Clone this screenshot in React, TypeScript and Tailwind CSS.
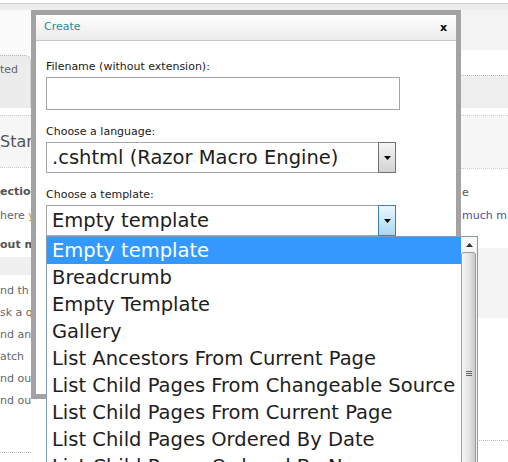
import React from "react";

const FONT = "font-['DejaVu_Sans',sans-serif]";

function Arrow({ color = "#000" }: { color?: string }) {
  return (
    <svg width="7" height="4" viewBox="0 0 7 4">
      <path d="M0 0H7L3.5 4Z" fill={color} />
    </svg>
  );
}

function Select({ text, open }: { text: string; open?: boolean }) {
  return (
    <div className="mt-[4px] flex h-[31px] w-[350px]">
      <div className="flex flex-1 items-center border-y border-l border-[#a5a5a5] pl-[5px]">
        <span className="whitespace-nowrap text-[19.5px] leading-none text-[#1e1e1e]">{text}</span>
      </div>
      <div
        className={
          open
            ? "flex w-[18px] items-center justify-center border border-[#3c7fb1] bg-linear-to-b from-[#eaf6fd] to-[#a7d9f5]"
            : "flex w-[18px] items-center justify-center border border-[#707070] bg-linear-to-b from-[#f4f4f4] to-[#d3d3d3]"
        }
      >
        <Arrow />
      </div>
    </div>
  );
}

const items = [
  "Empty template",
  "Breadcrumb",
  "Empty Template",
  "Gallery",
  "List Ancestors From Current Page",
  "List Child Pages From Changeable Source",
  "List Child Pages From Current Page",
  "List Child Pages Ordered By Date",
  "List Child Pages Ordered By Name",
];

export default function App() {
  return (
    <div className={`relative h-[462px] w-[508px] overflow-hidden bg-white ${FONT}`}>
      {/* background page */}
      <div className="h-[3px] bg-white" />
      <div className="h-px bg-[#d0d0d0]" />
      <div className="h-[6px] bg-[#ededed]" />
      <div className="flex">
        {/* left column */}
        <div className="flex w-[31px] flex-col overflow-hidden text-[11px] text-[#666]">
          <div className="h-[45px] bg-[#fafafa]" />
          <div className="h-[53px] rounded-tr-[6px] border-t border-r border-dotted border-[#bbb] bg-[#ececec] pt-[7px] leading-[13px] whitespace-nowrap">
            ted
          </div>
          <div className="h-[7px]" />
          <div className="flex h-[53px] items-center border-y border-dotted border-[#ccc] bg-[#f6f6f6] text-[16px] whitespace-nowrap text-[#555]">
            Star
          </div>
          <div className="flex flex-col whitespace-nowrap pt-[12px]">
            <div className="h-[24px] leading-[24px] font-bold text-[#555]">ection</div>
            <div className="h-[24px] leading-[24px]">
              here <span className="text-[#d08a3a]">y</span>
            </div>
            <div className="mt-[5px] h-[24px] leading-[24px] font-bold text-[#555]">out m</div>
          </div>
          <div className="h-[18px] bg-[#f0f0f0]" />
          <div className="flex flex-col whitespace-nowrap pt-[5px] leading-[22px]">
            <div>nd th</div>
            <div>sk a q</div>
            <div>nd an</div>
            <div>atch</div>
            <div>nd ou</div>
            <div>nd out</div>
          </div>
          <div className="mt-[40px] border-b border-dotted border-[#bbb]" />
        </div>
        <div className="flex-1" />
        {/* right column */}
        <div className="flex w-[47px] flex-col overflow-hidden text-[11px] text-[#555]">
          <div className="h-[40px] bg-[#f3f3f3]" />
          <div className="h-[26px] border-b border-dotted border-[#bbb]" />
          <div className="h-[32px] bg-[#efefef]" />
          <div className="h-[8px] border-b border-dotted border-[#ccc]" />
          <div className="h-[53px] border-b border-dotted border-[#ccc] bg-[#f7f7f7]" />
          <div className="flex flex-col whitespace-nowrap pt-[12px] pl-px">
            <div className="h-[23px] leading-[23px]">e</div>
            <div className="h-[23px] leading-[23px] text-[#5a4a9a]">much m</div>
          </div>
          <div className="mt-[21px] h-[70px] bg-[#f3f3f3]" />
          <div className="mt-[122px] border-b border-dotted border-[#bbb]" />
        </div>
      </div>

      {/* modal */}
      <div className="absolute top-[10px] left-[31px] flex h-[389px] w-[430px] flex-col border-[5px] border-[#a3a3a3] bg-white">
        <div className="flex h-[26px] items-center justify-between border-b border-[#c8c8c8] bg-linear-to-b from-white to-[#ebebeb] pr-[9px] pl-[8px]">
          <span className="text-[11px] text-[#2f8a98]">Create</span>
          <span className="text-[11px] leading-none font-bold text-black">x</span>
        </div>
        <div className="flex flex-col px-[10px] pt-[19px] text-[11px] leading-[13px] text-[#1a1a1a]">
          <div>Filename (without extension):</div>
          <div className="mt-[4px] h-[33px] w-[354px] border border-[#a5a5a5]" />
          <div className="mt-[15px]">Choose a language:</div>
          <Select text=".cshtml (Razor Macro Engine)" />
          <div className="mt-[15px]">Choose a template:</div>
          <Select text="Empty template" open />
        </div>
      </div>

      {/* open dropdown list */}
      <div className="absolute top-[236px] left-[46px] flex h-[260px] w-[432px] border border-[#7f9db9] bg-white">
        <div className="flex flex-1 flex-col">
          {items.map((t, i) => (
            <div
              key={t}
              className={
                i === 0
                  ? "flex h-[27px] items-center bg-[#3399ff] pl-[5px] text-[19.5px] whitespace-nowrap text-white"
                  : "flex h-[27px] items-center pl-[5px] text-[19.5px] whitespace-nowrap text-[#1e1e1e]"
              }
            >
              {t}
            </div>
          ))}
        </div>
        <div className="flex w-[16px] flex-col bg-[#f0f0f0]">
          <div className="flex h-[19px] items-center justify-center bg-[#f7f7f7]">
            <svg width="7" height="4" viewBox="0 0 7 4">
              <path d="M3.5 0L7 4H0Z" fill="#333" />
            </svg>
          </div>
          <div className="flex h-[300px] w-[15px] flex-col items-center justify-center rounded-t-[3px] border border-[#9c9c9c] bg-linear-to-r from-[#f6f6f6] via-[#e6e6e6] to-[#c9c9c9]">
            <div className="flex flex-col gap-[1px]">
              <div className="h-px w-[6px] bg-[#666]" />
              <div className="h-px w-[6px] bg-[#666]" />
              <div className="h-px w-[6px] bg-[#666]" />
            </div>
          </div>
        </div>
      </div>
    </div>
  );
}
